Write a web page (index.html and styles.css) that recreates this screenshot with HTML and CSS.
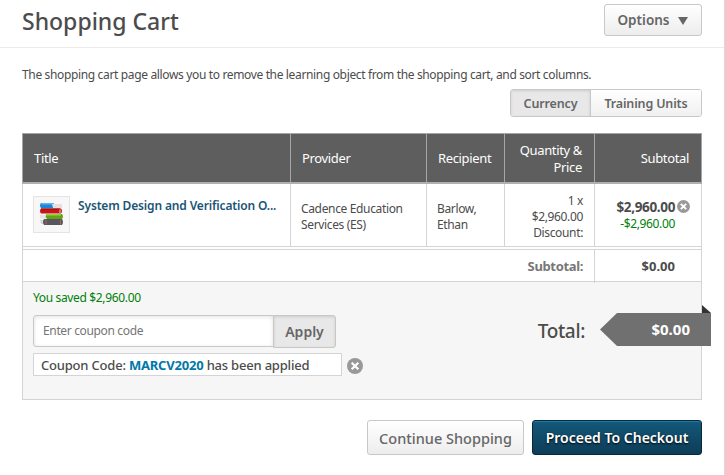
FILE: index.html
```html
<!DOCTYPE html>
<html lang="en">
<head>
  <meta charset="UTF-8">
  <title>Shopping Cart</title>
  <link rel="stylesheet" href="styles.css">
</head>
<body>
  <div class="page">
    <header class="page-header">
      <h1>Shopping Cart</h1>
      <button class="btn options">Options <span class="caret"></span></button>
    </header>

    <main class="content">
      <p class="intro">The shopping cart page allows you to remove the learning object from the shopping cart, and sort columns.</p>

      <div class="toggle">
        <button class="toggle-item active">Currency</button>
        <button class="toggle-item">Training Units</button>
      </div>

      <div class="cart">
        <div class="row head">
          <div class="cell">Title</div>
          <div class="cell">Provider</div>
          <div class="cell">Recipient</div>
          <div class="cell right">Quantity &amp;<br>Price</div>
          <div class="cell right">Subtotal</div>
        </div>

        <div class="row item">
          <div class="cell title">
            <div class="thumb">
              <svg width="25" height="23" viewBox="0 0 25 23">
                <path d="M2 0h13v5H2q-2-2.500 0-5z" fill="#1c86dc"/>
                <path d="M3 0h12v1.500H2z" fill="#5cb4f0"/>
                <path d="M13 1h10v4H14z" fill="#e6dfdd"/>
                <path d="M2 5.500h20q2 2.500 0 5H2q-2-2.500 0-5z" fill="#c81414"/>
                <path d="M2 5.500h19v1H2z" fill="#8c1010"/>
                <path d="M20.500 6.500h1v3.500h-1z" fill="#f3c4c0"/>
                <path d="M1 12h8v3.500H1z" fill="#e6e6e2"/>
                <path d="M7 11h16q2 2.500 0 5H8q-2-2.500-1-5z" fill="#62a414"/>
                <path d="M7 11h15v1.500H7z" fill="#98cf4a"/>
                <path d="M1 17h5v4H2z" fill="#d8d4d2"/>
                <path d="M5 16h18q2 3 0 6H5q-2-3 0-6z" fill="#58555c"/>
                <path d="M6.500 17h1v4.500h-1zM21 17h1v4.500h-1z" fill="#b06058"/>
              </svg>
            </div>
            <a class="item-name">System Design and Verification O...</a>
          </div>
          <div class="cell provider">Cadence Education<br>Services (ES)</div>
          <div class="cell recipient">Barlow,<br>Ethan</div>
          <div class="cell qty">1 x<br>$2,960.00<br>Discount:</div>
          <div class="cell price">
            <div>
              <strong>$2,960.00</strong>
              <span class="discount">-$2,960.00</span>
            </div>
            <svg class="remove" width="13" height="13" viewBox="0 0 16 16">
              <circle cx="8" cy="8" r="8" fill="#999"/>
              <path d="M4.700 4.700l6.600 6.600M11.300 4.700l-6.600 6.600" stroke="#fff" stroke-width="2.400"/>
            </svg>
          </div>
        </div>

        <div class="row summary">
          <div class="summary-label">Subtotal:</div>
          <div class="cell summary-value">$0.00</div>
        </div>

        <div class="footer">
          <div class="coupon">
            <p class="saved">You saved $2,960.00</p>
            <div class="coupon-form">
              <input type="text" class="coupon-input" placeholder="Enter coupon code">
              <button class="apply">Apply</button>
            </div>
            <div class="applied-row">
              <div class="applied">Coupon Code: <b>MARCV2020</b> has been applied</div>
              <svg width="16" height="16" viewBox="0 0 16 16">
                <circle cx="8" cy="8" r="8" fill="#999"/>
                <path d="M4.700 4.700l6.600 6.600M11.300 4.700l-6.600 6.600" stroke="#fff" stroke-width="2.200"/>
              </svg>
            </div>
          </div>
          <div class="total">
            <span class="total-label">Total:</span>
            <div class="ribbon">$0.00</div>
          </div>
        </div>
      </div>

      <div class="actions">
        <button class="btn continue">Continue Shopping</button>
        <button class="btn checkout">Proceed To Checkout</button>
      </div>
    </main>
  </div>
</body>
</html>
```
FILE: styles.css
```css
* {
  box-sizing: border-box;
}
body {
  margin: 0;
  font-family: "Noto Sans", "Open Sans", sans-serif;
  font-size: 12px;
  letter-spacing: -0.35px;
  color: #4c4c4c;
  background: #fff;
}
h1, p {
  margin: 0;
}
button, input {
  font-family: inherit;
  padding: 0;
  margin: 0;
}
.page {
  height: 475px;
  border-right: 1px solid #d9d9d9;
  overflow: hidden;
}
.page-header {
  display: flex;
  justify-content: space-between;
  height: 48px;
  padding: 4px 22px 0;
  border-bottom: 1px solid #ebebeb;
}
h1 {
  font-size: 23px;
  font-weight: 500;
  line-height: 35px;
  letter-spacing: 0;
}
.btn {
  border: 1px solid #c8c8c8;
  border-radius: 3px;
  background: linear-gradient(#fff, #ededed);
  color: #666;
  font-weight: 600;
  white-space: nowrap;
}
.options {
  display: flex;
  align-items: center;
  justify-content: center;
  gap: 9px;
  width: 98px;
  height: 32px;
  padding-bottom: 1px;
  font-size: 13.5px;
}
.caret {
  margin-top: 2px;
  border: 5px solid transparent;
  border-top: 8px solid #666;
  border-bottom: 0;
}
.content {
  padding: 16px 22px 0;
}
.intro {
  padding-top: 1px;
  line-height: 19px;
  white-space: nowrap;
}
.toggle {
  display: flex;
  width: 192px;
  height: 28px;
  margin: 5px 0 16px auto;
  border: 1px solid #c8c8c8;
  border-radius: 3px;
  overflow: hidden;
}
.toggle-item {
  flex: 1;
  border: 0;
  background: linear-gradient(#fff, #f0f0f0);
  color: #666;
  font-size: 12.5px;
  font-weight: 600;
  letter-spacing: -0.15px;
  white-space: nowrap;
}
.toggle-item.active {
  flex: 0 0 80px;
  border-right: 1px solid #c8c8c8;
  background: #e8e8e8;
  box-shadow: inset 0 1px 3px rgba(0,0,0,0.12);
}
.cart {
  border: 1px solid #d4d4d4;
  height: 267px;
}
.row {
  display: grid;
  grid-template-columns: 267px 136px 78px 90px 107px;
}
.cell {
  border-left: 1px solid #d4d4d4;
}
.cell:first-child {
  border-left: 0;
}
.head {
  height: 51px;
  margin: -1px -1px 0;
  border: 1px solid #a6a6a6;
  border-bottom: 2px solid #b0b0b0;
  background: #5e5e5e;
  color: #fff;
  font-size: 13px;
  line-height: 17px;
}
.head .cell {
  display: flex;
  align-items: center;
  padding: 1px 12px 0 11px;
  border-color: #a6a6a6;
}
.head .right {
  justify-content: flex-end;
  text-align: right;
}
.item {
  height: 63px;
  border-bottom: 1px solid #d4d4d4;
  line-height: 16px;
}
.title {
  display: flex;
  gap: 8px;
  padding: 12px 0 0 10px;
}
.thumb {
  display: flex;
  align-items: center;
  justify-content: center;
  width: 37px;
  height: 37px;
  border: 1px solid #e4e4e4;
  background: #f7f7f7;
}
.item-name {
  margin-top: 2px;
  color: #1a5576;
  font-weight: 600;
  letter-spacing: -0.15px;
  white-space: nowrap;
}
.provider, .recipient {
  padding: 17px 0 0 10px;
}
.qty {
  padding: 9px 11px 0 0;
  text-align: right;
}
.price {
  display: flex;
  justify-content: flex-end;
  gap: 2px;
  padding: 15px 11px 0 0;
  text-align: right;
}
.price strong {
  display: block;
  font-size: 13.5px;
  line-height: 17px;
}
.discount {
  color: #00800b;
}
.remove {
  margin-top: 1px;
}
.summary {
  grid-template-columns: 571px 107px;
  height: 33px;
  margin-top: 2px;
  border-top: 1px solid #d4d4d4;
  border-bottom: 1px solid #d4d4d4;
  font-size: 13px;
  font-weight: 700;
  line-height: 33px;
  text-align: right;
}
.summary-label {
  padding-right: 11px;
  color: #777;
}
.summary-value {
  padding-right: 26px;
  letter-spacing: 0;
}
.footer {
  display: flex;
  justify-content: space-between;
  height: 117px;
  padding-left: 10px;
  background: #f6f6f6;
}
.saved {
  margin-top: 8px;
  color: #00800b;
  line-height: 16px;
}
.coupon-form {
  display: flex;
  margin-top: 9px;
}
.coupon-input {
  width: 241px;
  height: 32px;
  padding: 0 0 1px 9px;
  border: 1px solid #c8c8c8;
  border-radius: 3px 0 0 3px;
  box-shadow: inset 0 1px 4px rgba(0,0,0,0.12);
  font-size: 12px;
  letter-spacing: -0.35px;
}
.coupon-input::placeholder {
  color: #757575;
}
.apply {
  width: 63px;
  height: 33px;
  margin-left: -1px;
  border: 1px solid #c8c8c8;
  border-radius: 0 3px 3px 0;
  background: #e8e8e8;
  box-shadow: inset 0 1px 3px rgba(0,0,0,0.12);
  color: #666;
  font-size: 14px;
  font-weight: 600;
}
.applied-row {
  display: flex;
  align-items: center;
  gap: 5px;
  margin-top: 5px;
}
.applied {
  width: 309px;
  height: 23px;
  padding-left: 7px;
  border: 1px solid #d4d4d4;
  background: #fff;
  font-size: 13px;
  font-weight: 500;
  line-height: 23px;
  letter-spacing: -0.2px;
  white-space: nowrap;
}
.applied b {
  color: #0078a8;
}
.applied-row svg {
  margin-top: 3px;
}
.total {
  display: flex;
  gap: 15px;
  margin: 31px -10px 0 0;
  height: 33px;
}
.total-label {
  font-size: 19px;
  font-weight: 500;
  line-height: 36px;
}
.ribbon {
  width: 111px;
  height: 33px;
  padding-right: 21px;
  background: #707070;
  clip-path: polygon(0 50%, 17px 0, 100% 0, 100% 100%, 17px 100%);
  color: #fff;
  font-size: 15px;
  font-weight: 700;
  line-height: 33px;
  letter-spacing: 0;
  text-align: right;
}
/* folded corner behind the ribbon */
.total::after {
  content: "";
  width: 9px;
  height: 8px;
  margin: -8px 0 0 -24px;
  background: #333;
  clip-path: polygon(0 0, 100% 100%, 0 100%);
}
.actions {
  display: flex;
  justify-content: flex-end;
  gap: 8px;
  margin-top: 20px;
}
.actions .btn {
  height: 35px;
  font-size: 14px;
}
.actions .continue {
  width: 157px;
  font-size: 14.5px;
  font-weight: 500;
}
.actions .checkout {
  width: 170px;
  border-color: #06283a;
  background: linear-gradient(#14587b, #0d3d57);
  box-shadow: inset 0 1px 0 #1b7ba6;
  color: #fff;
  text-shadow: 0 1px 2px #000;
}
```
